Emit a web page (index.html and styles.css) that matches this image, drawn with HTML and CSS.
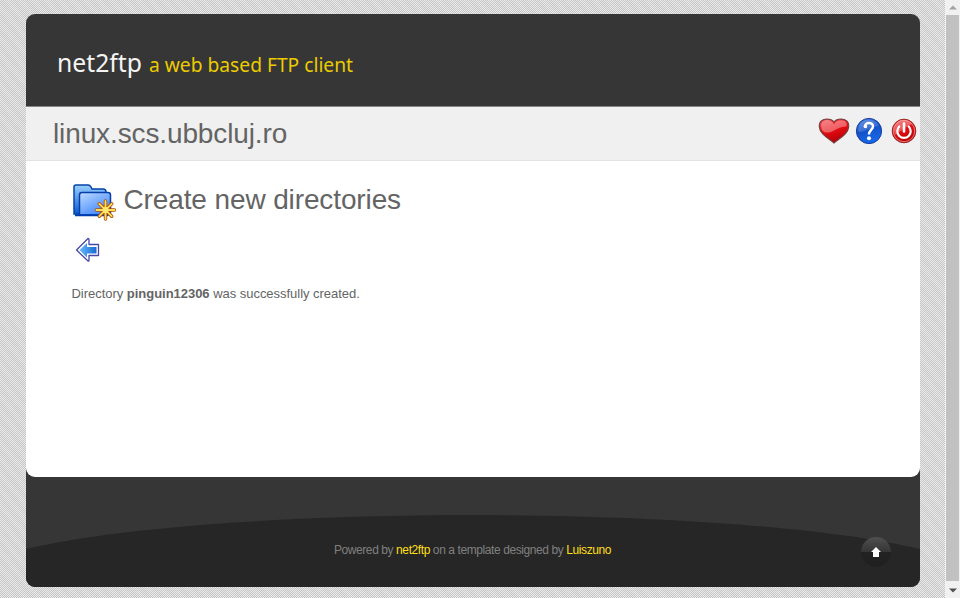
FILE: index.html
```html
<!DOCTYPE html>
<html lang="en">
<head>
<meta charset="utf-8">
<title>net2ftp</title>
<link rel="stylesheet" href="styles.css">
</head>
<body>
<div class="page">
  <div class="wrapper">
    <main class="panel">
      <header class="header">
        <svg class="logo" width="310" height="48" viewBox="0 0 310 48">
          <text class="logo-name" x="0" y="32" textLength="85" lengthAdjust="spacingAndGlyphs">net2ftp</text>
          <text class="logo-tag" x="92" y="32" textLength="204" lengthAdjust="spacingAndGlyphs">a web based FTP client</text>
        </svg>
      </header>
      <div class="serverbar">
        <h1 class="title">linux.scs.ubbcluj.ro</h1>
        <nav class="actions">
          <svg width="32" height="28" viewBox="0 0 32 28">
            <defs><linearGradient id="red" x2=".35" y2="1"><stop stop-color="#ee4a50"/><stop offset=".5" stop-color="#e80e14"/><stop offset="1" stop-color="#b80006"/></linearGradient></defs>
            <path d="M16 26C12 22 2 18 1.3 10C.8 4.5 4.500 2 9 2C12.500 2 15 3.600 16 5C17 3.600 19.500 2 23 2C27.500 2 31.200 4.500 30.700 10C30 18 20 22 16 26Z" fill="url(#red)" stroke="#754040" stroke-width="1.1"/>
            <path d="M3 9C3 4 7 2.800 10 3C13 3.200 15 5 16 7.500C18 3.500 22 2.600 26 3.800C29 5 29 8 28.500 9.500C24 9 19 12 15 14C10 16.500 6 16 4 13Z" fill="#fff" opacity=".35"/>
          </svg>
          <svg width="28" height="28" viewBox="0 0 28 28">
            <defs><linearGradient id="help" x2=".4" y2="1"><stop stop-color="#4c86dd"/><stop offset=".5" stop-color="#1250c8"/><stop offset="1" stop-color="#1768e6"/></linearGradient></defs>
            <circle cx="14" cy="14" r="12.600" fill="url(#help)" stroke="#183ca0"/>
            <path d="M3 13A11 11 0 0 1 24 9C17 9 11 15 4 15Z" fill="#fff" opacity=".18"/>
            <path d="M10 9.500C10 5 18 4.500 18 9.500C18 12.500 14 13 14 17.500" fill="none" stroke="#fff" stroke-width="2.500"/>
            <circle cx="10.400" cy="9.500" r="1.800" fill="#fff"/><circle cx="14" cy="21.300" r="2" fill="#fff"/>
          </svg>
          <svg width="26" height="26" viewBox="0 0 26 26">
            <circle cx="13" cy="13" r="11.800" fill="url(#red)" stroke="#96201f"/>
            <circle cx="13" cy="13" r="10.700" fill="none" stroke="#f09090" stroke-width=".8"/>
            <path d="M3 13A10 10 0 0 1 21 6C15 8 9 14 4 17Z" fill="#fff" opacity=".3"/>
            <path d="M8.300 8.500A6.700 6.700 0 1 0 17.700 8.500" fill="none" stroke="#fff" stroke-width="2.200" stroke-linecap="round"/>
            <path d="M13 5.500V13.500" stroke="#fff" stroke-width="2.600" stroke-linecap="round"/>
          </svg>
        </nav>
      </div>
      <section class="content">
        <div class="heading">
          <svg width="44" height="38" viewBox="0 0 44 38">
            <defs>
              <linearGradient id="back" x2="0" y2="1"><stop stop-color="#9bd0ff"/><stop offset="1" stop-color="#075bd0"/></linearGradient>
              <linearGradient id="front" x2=".7" y2="1"><stop stop-color="#c0dcff"/><stop offset="1" stop-color="#3c84fa"/></linearGradient>
            </defs>
            <path d="M2 31V4Q2 2 4 2H16Q18 2 19 4L20 6H31Q34 6 34 9V31Z" fill="url(#back)" stroke="#0643a8" stroke-width="1.500"/>
            <path d="M7.500 32V12Q7.500 9.500 10 9.500H36Q38.500 9.500 38.500 12V30Q38.500 32 36 32Z" fill="url(#front)" stroke="#073ea8" stroke-width="1.500"/>
            <path d="M3 32.300H36" stroke="#003cae" stroke-width="2"/>
            <g fill="none" stroke-linecap="round"><path d="M33.500 18V36M24.500 27H42.500M27.300 20.800L39.700 33.200M39.700 20.800L27.300 33.200" stroke="#b64b0b" stroke-width="3.400"/><path d="M33.500 18V36M24.500 27H42.500M27.300 20.800L39.700 33.200M39.700 20.800L27.300 33.200" stroke="#ffe052" stroke-width="1.800"/></g>
            <circle cx="33.500" cy="27" r="3" fill="#ffe870"/>
          </svg>
          <h2 class="title">Create new directories</h2>
        </div>
        <svg class="back" width="26" height="26" viewBox="0 0 26 26">
          <defs><linearGradient id="arrow"><stop stop-color="#65b9ff"/><stop offset="1" stop-color="#1769cf"/></linearGradient></defs>
          <path d="M1.500 13L13 1.500Q14 1.500 14 2.500V7.500H23.500V18.500H14V23.500Q14 24.500 13 24Z" fill="#fff" stroke="#4848a8" stroke-width="1.300" stroke-linejoin="round"/>
          <path d="M4.500 13L12 6V10H21.500V16.500H12V20.500Z" fill="url(#arrow)"/>
        </svg>
        <p class="message">Directory <strong>pinguin12306</strong> was successfully created.</p>
      </section>
    </main>
    <footer class="footer">
      <svg class="curve" width="894" height="111" viewBox="0 0 894 111" preserveAspectRatio="none"><path d="M0 72C90 50 270 38 447 38S804 50 894 72V111H0Z" fill="#262626"/></svg>
      <p class="credit">Powered by <a>net2ftp</a> on a template designed by <a>Luiszuno</a></p>
      <a class="top"><svg width="12" height="12" viewBox="0 0 12 12"><path d="M6 1L11 6H9V11H3V6H1Z" fill="#fff"/></svg></a>
    </footer>
  </div>
</div>
<div class="scrollbar">
  <svg width="14" height="14" viewBox="0 0 14 14"><path d="M3 9.500L7 5.500L11 9.500Z" fill="#a3a3a3"/></svg>
  <div class="thumb"></div>
  <svg width="14" height="17" viewBox="0 0 14 17"><path d="M3 7.500L7 11.500L11 7.500Z" fill="#505050"/></svg>
</div>
</body>
</html>
```

FILE: styles.css
```css
* { box-sizing: border-box; }
body {
  margin: 0;
  height: 598px;
  overflow: hidden;
  display: flex;
  font-family: "Liberation Sans", Arial, sans-serif;
  color: #646464;
}
svg { display: block; flex: none; }
h1, h2, p { margin: 0; }
.page {
  flex: 1;
  padding: 14px 25.500px 0;
  background:
    repeating-linear-gradient(50deg, rgba(255, 255, 255, .12) 0, rgba(255, 255, 255, 0) 5px, rgba(255, 255, 255, .12) 10px),
    repeating-conic-gradient(#c2c2c2 0 25%, #e9e9e9 0 50%) 0 0 / 2px 2px;
}
.wrapper {
  width: 894px;
  height: 573px;
  border-radius: 9px;
  overflow: hidden;
  background: #363636;
}
.panel {
  height: 462.500px;
  display: flex;
  flex-direction: column;
  border-radius: 0 0 9px 9px;
  overflow: hidden;
  background: #fff;
}
.header { height: 92px; padding: 26px 0 0 31.500px; background: #363636; }
.logo { overflow: visible; }
.logo-name, .logo-tag { font-family: "Noto Sans", sans-serif; }
.logo-name { font-size: 25px; fill: #f4f4f4; }
.logo-tag { font-size: 19.500px; fill: #eccb00; }
.serverbar {
  height: 55px;
  display: flex;
  justify-content: space-between;
  align-items: center;
  padding: 0 2.500px 0 27.500px;
  background: #f0f0f0;
  border-top: 1px solid #858585;
  border-bottom: 1px solid #e3e3e3;
}
.title { font-size: 28px; line-height: 34px; font-weight: 400; letter-spacing: -.12px; white-space: nowrap; }
.actions { display: flex; align-items: center; gap: 5px; margin-top: -5px; }
.actions svg:last-child { margin-left: 3px; }
.content { padding: 22px 46px 0; }
.heading { display: flex; gap: 8px; height: 38px; }
.back { margin: 16px 0 0 3px; }
.message { margin-top: 21px; font-size: 13px; line-height: 20px; letter-spacing: -.03px; }
.footer { display: grid; height: 110.500px; }
.footer > * { grid-area: 1 / 1; }
.credit {
  padding-top: 65px;
  text-align: center;
  font-size: 12px;
  line-height: 16px;
  color: #808080;
  letter-spacing: -.41px;
}
.credit a { color: #ffdf18; }
.top {
  width: 30px;
  height: 30px;
  margin: 60px 28.500px 0 0;
  justify-self: end;
  display: flex;
  align-items: center;
  justify-content: center;
  border-radius: 50%;
  background: linear-gradient(#505050, #353535 50%, #222 51%, #202020);
}
.scrollbar {
  width: 15px;
  display: flex;
  flex-direction: column;
  align-items: center;
  background: #f1f1f1;
}
.thumb { flex: 1; width: 13px; margin-top: 1px; background: #c1c1c1; }
```
